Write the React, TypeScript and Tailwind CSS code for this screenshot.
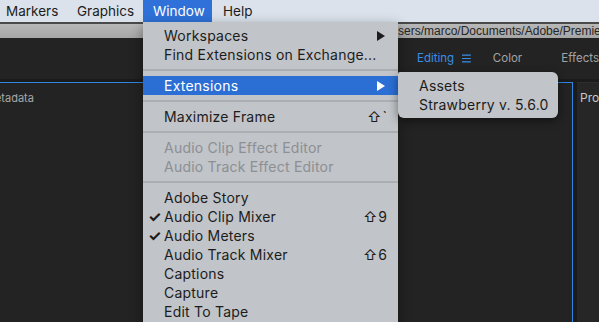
import React from "react"

type Item =
  | { kind: "sep" }
  | { kind: "item"; label: string; check?: boolean; shortcut?: string; submenu?: boolean; disabled?: boolean; active?: boolean }

const items: Item[] = [
  { kind: "item", label: "Workspaces", submenu: true },
  { kind: "item", label: "Find Extensions on Exchange..." },
  { kind: "sep" },
  { kind: "item", label: "Extensions", submenu: true, active: true },
  { kind: "sep" },
  { kind: "item", label: "Maximize Frame", shortcut: "⇧`" },
  { kind: "sep" },
  { kind: "item", label: "Audio Clip Effect Editor", disabled: true },
  { kind: "item", label: "Audio Track Effect Editor", disabled: true },
  { kind: "sep" },
  { kind: "item", label: "Adobe Story" },
  { kind: "item", label: "Audio Clip Mixer", check: true, shortcut: "⇧9" },
  { kind: "item", label: "Audio Meters", check: true },
  { kind: "item", label: "Audio Track Mixer", shortcut: "⇧6" },
  { kind: "item", label: "Captions" },
  { kind: "item", label: "Capture" },
  { kind: "item", label: "Edit To Tape" },
]

function Arrow({ white }: { white?: boolean }) {
  return (
    <svg width="8" height="10" viewBox="0 0 8 10" className="shrink-0">
      <path d="M0 0 L8 5 L0 10 Z" fill={white ? "#ffffff" : "#1c1c1c"} />
    </svg>
  )
}

function WindowMenu() {
  return (
    <div className="absolute left-[143px] top-[22px] w-[255px] h-[310px] bg-[#c1c4c8] pt-[4px] shadow-[0_4px_12px_rgba(0,0,0,0.4)] tracking-[0.22px]">
      {items.map((it, i) =>
        it.kind === "sep" ? (
          <div key={i} className="h-[12px] flex items-center">
            <div className="w-full h-[2px] bg-[#abaeb2]" />
          </div>
        ) : (
          <div
            key={i}
            className={`h-[19px] flex items-center pr-[10px] ${it.active ? "bg-[#2b6fd5] text-white" : it.disabled ? "text-[#8c8f93]" : "text-[#1c1c1c]"}`}
          >
            <span className="w-[21px] pl-[5px] text-[15px] font-bold leading-none">{it.check ? "✓" : ""}</span>
            <span className="flex-1">{it.label}</span>
            {it.shortcut && <span className="tracking-[1px]">{it.shortcut}</span>}
            {it.submenu && <span className="mr-[3px]"><Arrow white={it.active} /></span>}
          </div>
        )
      )}
    </div>
  )
}

function SubMenu() {
  return (
    <div className="absolute left-[398px] top-[72px] w-[160px] h-[46px] bg-[#c1c4c8] rounded-[6px] rounded-tl-[2px] pt-[4px] shadow-[0_3px_10px_rgba(0,0,0,0.45)] text-[#1c1c1c] tracking-[0.22px]">
      <div className="h-[19px] flex items-center pl-[21px]">Assets</div>
      <div className="h-[19px] flex items-center pl-[21px]">Strawberry v. 5.6.0</div>
    </div>
  )
}

export default function App() {
  return (
    <div className="relative w-[599px] h-[322px] overflow-hidden bg-[#1b1b1b] text-[14px] font-['Inter','Liberation_Sans',sans-serif]">
      {/* mac menu bar */}
      <div className="h-[22px] bg-[#dbe2eb] flex items-center text-[#1c1c1c] text-[13.5px]">
        <div className="w-[77px] pl-[6px]">Markers</div>
        <div className="w-[66px]">Graphics</div>
        <div className="h-full w-[69px] pl-[10px] bg-[#2f71d8] text-white flex items-center">Window</div>
        <div className="pl-[11px]">Help</div>
      </div>
      <div className="h-[2px] bg-[#4a4a4a]" />

      {/* title bar */}
      <div className="h-[14px] bg-gradient-to-b from-[#b8b8b8] to-[#a6a6a6] flex items-center pl-[398px] text-[12px] text-[#262626] whitespace-nowrap overflow-hidden font-['Liberation_Sans',sans-serif]">
        sers/marco/Documents/Adobe/Premiere Pro
      </div>

      {/* workspace bar */}
      <div className="h-[41px] bg-[#232323] flex items-center pl-[417px] text-[11.5px] whitespace-nowrap">
        <span className="text-[#3b8ee6] w-[46px]">Editing</span>
        <svg width="9" height="9" viewBox="0 0 9 9">
          <path d="M0 1 H9 M0 4.5 H9 M0 8 H9" stroke="#3b8ee6" strokeWidth="1.2" />
        </svg>
        <span className="ml-[22px] w-[70px] text-[#a3a3a3]">Color</span>
        <span className="text-[#a3a3a3]">Effects</span>
      </div>
      <div className="h-[3px] bg-[#1b1b1b]" />

      {/* panels */}
      <div className="flex h-[240px]">
        <div className="w-[573px] bg-[#232323] border-t-[1.5px] border-r-[1.5px] border-[#2f86e0] overflow-hidden">
          <div className="ml-[-15px] mt-[7px] text-[11px] text-[#a9a9a9] whitespace-nowrap">Metadata</div>
        </div>
        <div className="w-[4px] bg-[#1b1b1b]" />
        <div className="flex-1 bg-[#262626] border-t border-[#2e2e2e] overflow-hidden">
          <div className="ml-[3px] mt-[6px] text-[12px] text-[#c8c8c8] whitespace-nowrap">Program</div>
        </div>
      </div>

      <WindowMenu />
      <SubMenu />
    </div>
  )
}
